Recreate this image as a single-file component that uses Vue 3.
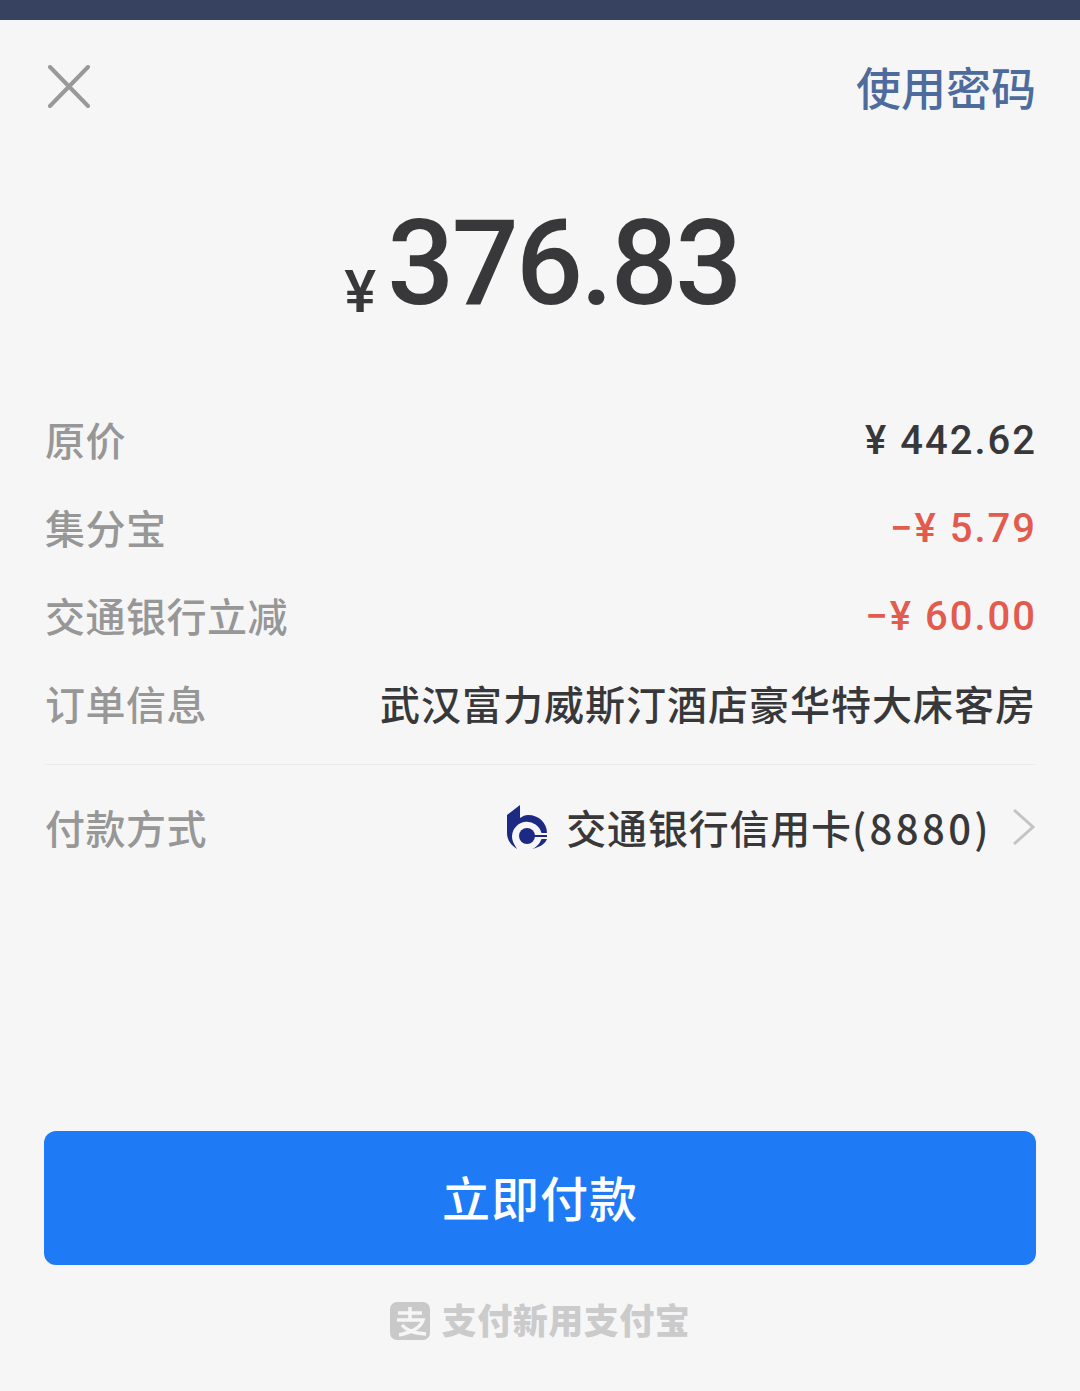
<script setup>
const rows = [
  { label: '原价', value: '¥ 442.62' },
  { label: '集分宝', value: '−¥ 5.79', red: true },
  { label: '交通银行立减', value: '−¥ 60.00', red: true },
  { label: '订单信息', value: '武汉富力威斯汀酒店豪华特大床客房', cjk: true }
];
</script>

<template>
  <div class="page">
    <div class="status-bar"></div>

    <div class="head">
      <svg class="close" width="44" height="44" viewBox="0 0 44 44">
        <path d="M3 2L41 41M41 2L3 41" stroke="#999" stroke-width="4" stroke-linecap="round" fill="none" />
      </svg>
      <span class="use-password">使用密码</span>
    </div>

    <div class="amount">
      <span class="yen">¥</span><span class="num">376.83</span>
    </div>

    <div class="rows">
      <div v-for="row in rows" :key="row.label" class="row">
        <span class="label">{{ row.label }}</span>
        <span :class="['value', { red: row.red, cjk: row.cjk }]">{{ row.value }}</span>
      </div>
    </div>

    <div class="pay-way">
      <span class="label">付款方式</span>
      <div class="pay-right">
        <svg class="bank" width="41" height="44" viewBox="0 0 41 44">
          <path d="M0 10L13 0V13C16 11 18 10 21 10C32 10 40 18 40 28H34.5A15 15 0 0 0 5 31C5 37 8 40 10 44C4 40 0 35 0 28Z" fill="#1d2a83" />
          <circle cx="20" cy="31" r="8" fill="#1d2a83" />
          <path d="M26 30H40V32H26Z" fill="#1d2a83" />
          <path d="M34.5 34H40C38 39 33 42 25 44C30 42 33 38 34.5 34Z" fill="#1d2a83" />
        </svg>
        <span class="bank-name">交通银行信用卡<span class="card-no">(8880)</span></span>
        <svg class="chevron" width="24" height="38" viewBox="0 0 24 38">
          <path d="M2 2L21 19L2 36" stroke="#c4c4c4" stroke-width="3" fill="none" />
        </svg>
      </div>
    </div>

    <button class="pay-btn">立即付款</button>

    <div class="foot">
      <svg class="foot-logo" width="40" height="38" viewBox="0 0 40 38">
        <rect width="40" height="38" rx="7" fill="#c9c9c9" />
        <path d="M8 11H32M20 5V17M7 18H33C31 25 23 30 9 33M12 23C17 29 24 31 36 32" stroke="#f6f6f6" stroke-width="3.5" fill="none" />
      </svg>
      <span class="foot-text">支付新用支付宝</span>
    </div>
  </div>
</template>

<style scoped>
.page {
  width: 1080px;
  height: 1391px;
  background: #f6f6f7;
  font-family: "Noto Sans CJK SC", "Noto Sans", sans-serif;
  overflow: hidden;
}

.status-bar {
  height: 20px;
  background: #36425f;
}

.head {
  display: flex;
  justify-content: space-between;
  align-items: center;
  height: 44px;
  padding: 45px 44px 0 47px;
}

.use-password {
  font-size: 45px;
  line-height: 44px;
  font-weight: 500;
  color: #4d6b9c;
}

.amount {
  display: flex;
  justify-content: center;
  align-items: baseline;
  margin-top: 88px;
  height: 134px;
  padding-left: 4px;
  color: #38383a;
  font-family: Roboto, sans-serif;
  font-weight: 500;
}

.yen {
  align-self: flex-end;
  font-size: 60px;
  line-height: 60px;
  margin: 0 11px 9px 0;
}

.num {
  font-size: 118px;
  line-height: 134px;
  letter-spacing: -2.6px;
}

.rows {
  margin: 64px 44px 0 45px;
  padding-bottom: 17px;
  border-bottom: 1px solid #ececec;
}

.row {
  display: flex;
  justify-content: space-between;
  align-items: center;
  height: 88px;
}

.label {
  font-size: 40px;
  font-weight: 500;
  letter-spacing: 0.5px;
  color: #979797;
}

.value {
  padding-top: 3px;
  font-family: Roboto, sans-serif;
  font-weight: 500;
  font-size: 40px;
  letter-spacing: 2px;
  color: #38383a;
  margin-right: -1px;
}

.value.red {
  color: #e25b4d;
}

.value.cjk {
  padding-top: 0;
  margin-right: 0;
  font-family: "Noto Sans CJK SC", sans-serif;
  font-weight: 500;
  letter-spacing: 1px;
}

.pay-way {
  display: flex;
  justify-content: space-between;
  align-items: center;
  height: 88px;
  margin: 18px 44px 0 45px;
}

.pay-right {
  display: flex;
  align-items: center;
}

.bank-name {
  font-size: 40px;
  font-weight: 500;
  letter-spacing: 0.8px;
  color: #38383a;
  margin-left: 18px;
}

.card-no {
  letter-spacing: 3.4px;
}

.chevron {
  margin-left: 20px;
}

.pay-btn {
  display: block;
  width: 992px;
  height: 134px;
  margin: 260px 0 0 44px;
  padding: 0 0 4px;
  border: none;
  border-radius: 12px;
  background: #1f7af5;
  color: #fff;
  font-family: "Noto Sans CJK SC", sans-serif;
  font-size: 48px;
  font-weight: 500;
  letter-spacing: 1px;
}

.foot {
  display: flex;
  justify-content: center;
  align-items: center;
  gap: 12px;
  margin-top: 37px;
}

.foot-text {
  padding-bottom: 4px;
  font-size: 35px;
  line-height: 34px;
  font-weight: 900;
  letter-spacing: 0.5px;
  color: #cbcbcb;
}
</style>
